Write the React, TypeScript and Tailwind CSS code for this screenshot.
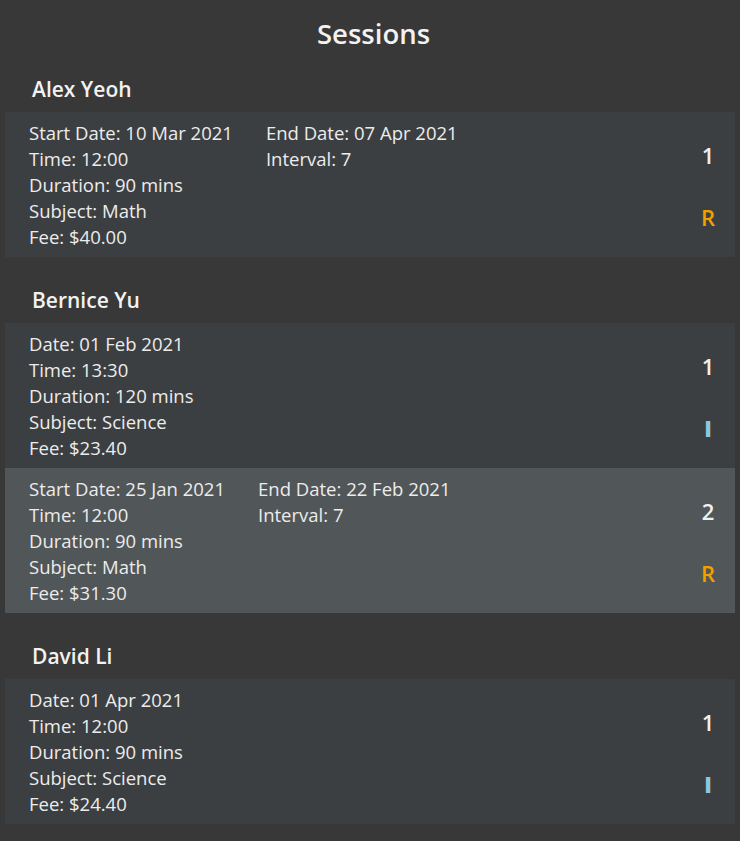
import React from "react";

type Session = {
  recurring: boolean;
  date: string;
  endDate?: string;
  interval?: number;
  time: string;
  duration: number;
  subject: string;
  fee: string;
  selected?: boolean;
};

type Group = { name: string; sessions: Session[] };

const groups: Group[] = [
  {
    name: "Alex Yeoh",
    sessions: [
      { recurring: true, date: "10 Mar 2021", endDate: "07 Apr 2021", interval: 7, time: "12:00", duration: 90, subject: "Math", fee: "40.00" },
    ],
  },
  {
    name: "Bernice Yu",
    sessions: [
      { recurring: false, date: "01 Feb 2021", time: "13:30", duration: 120, subject: "Science", fee: "23.40" },
      { recurring: true, date: "25 Jan 2021", endDate: "22 Feb 2021", interval: 7, time: "12:00", duration: 90, subject: "Math", fee: "31.30", selected: true },
    ],
  },
  {
    name: "David Li",
    sessions: [
      { recurring: false, date: "01 Apr 2021", time: "12:00", duration: 90, subject: "Science", fee: "24.40" },
    ],
  },
];

function SessionCard({ s, index }: { s: Session; index: number }) {
  return (
    <div
      className={`flex h-[145px] mr-[5px] pl-[24px] pr-[15px] pt-[8px] pb-[7px] ${
        s.selected ? "bg-[#515658]" : "bg-[#3c3f41]"
      }`}
    >
      <div className="flex flex-1 gap-[33px] text-[18.5px] leading-[26px] text-[#ececec]">
        <div className="flex flex-col">
          <span>{s.recurring ? `Start Date: ${s.date}` : `Date: ${s.date}`}</span>
          <span>Time: {s.time}</span>
          <span>Duration: {s.duration} mins</span>
          <span>Subject: {s.subject}</span>
          <span>Fee: ${s.fee}</span>
        </div>
        {s.recurring && (
          <div className="flex flex-col">
            <span>End Date: {s.endDate}</span>
            <span>Interval: {s.interval}</span>
          </div>
        )}
      </div>
      <div className="flex w-[24px] flex-col items-center justify-center gap-[31px] pt-[2px] text-[22px] leading-[31px] font-semibold">
        <span className="text-[#f0f0f0]">{index}</span>
        <span className={s.recurring ? "text-[#f2a000]" : "font-extrabold text-[#8fc6dd]"}>
          {s.recurring ? "R" : "I"}
        </span>
      </div>
    </div>
  );
}

export default function App() {
  return (
    <div
      className="min-h-[841px] w-[740px] bg-[#383838] pl-[5px]"
      style={{ fontFamily: "'Open Sans', 'Noto Sans', sans-serif" }}
    >
      <div className="flex h-[68px] items-center justify-center pl-[2px] text-[27.5px] font-semibold text-[#f2f2f2]">
        Sessions
      </div>
      {groups.map((g, gi) => (
        <div key={g.name} className={gi > 0 ? "mt-[22px]" : ""}>
          <div className="flex h-[44px] items-center pl-[27px] text-[21px] font-semibold text-[#f2f2f2]">
            {g.name}
          </div>
          {g.sessions.map((s, i) => (
            <SessionCard key={i} s={s} index={i + 1} />
          ))}
        </div>
      ))}
    </div>
  );
}
